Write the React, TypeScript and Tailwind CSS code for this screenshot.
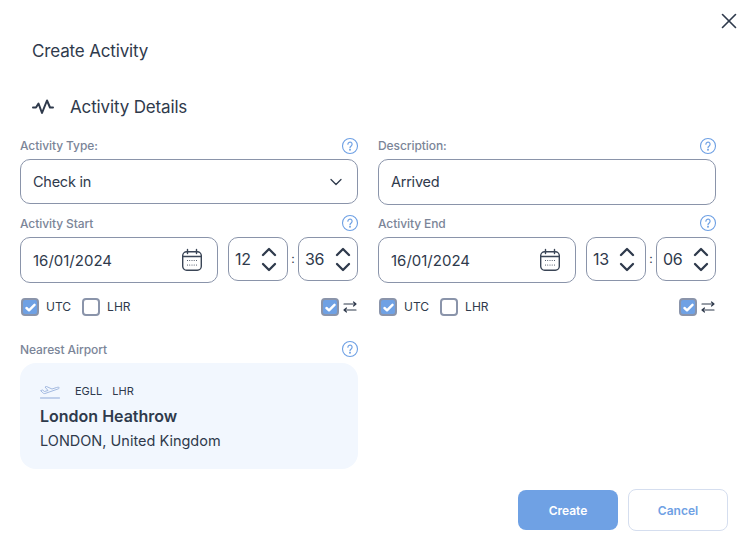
import React from 'react';
import { X, ChevronDown, ChevronUp } from 'lucide-react';

const HelpIcon = () => (
  <svg width="18" height="18" viewBox="0 0 18 18" fill="none" stroke="#6ea0e4" strokeWidth="1.1" strokeLinecap="round" className="-mr-px">
    <circle cx="9" cy="9" r="7.500" />
    <path d="M6.900 7.200a2.100 2.100 0 1 1 3.300 1.700c-.7.500-1.200.900-1.200 1.800" strokeWidth="1.200" />
    <circle cx="9" cy="12.800" r="0.400" fill="#6ea0e4" />
  </svg>
);

const Pulse = () => (
  <svg width="22" height="16" viewBox="0 0 22 16" fill="none" stroke="#2f3a4c" strokeWidth="2" strokeLinecap="round" strokeLinejoin="round">
    <path d="M1 8.500H4L6.500 4.500 10 14 15 1.500 18 8.500H21" />
  </svg>
);

const CalendarIcon = () => (
  <svg width="22" height="24" viewBox="0 0 22 24" fill="none" stroke="#3a4556" strokeWidth="1.400" strokeLinecap="round">
    <rect x="1.700" y="3.700" width="18.600" height="18.600" rx="4" />
    <path d="M1.700 8.500h18.600M6.500 1.500v4M15.500 1.500v4" />
    <path d="M6.500 12.500h.01M11 12.500h.01M15.500 12.500h.01M6.500 17h.01M11 17h.01M15.500 17h.01M8.700 12.500h.01M13.200 12.500h.01M8.700 17h.01M13.200 17h.01" strokeWidth="1.100" />
  </svg>
);

const SwapIcon = () => (
  <svg width="14" height="12" viewBox="0 0 14 12" fill="none" stroke="#2f3a4c" strokeWidth="1.200" strokeLinecap="round" strokeLinejoin="round">
    <path d="M1 3h12M10.500 1 13 3 10.500 5M13 9H1M3.500 7 1 9 3.500 11" />
  </svg>
);

const PlaneIcon = () => (
  <svg width="20" height="15" viewBox="0 0 20 15" fill="none" stroke="#8fa9d8" strokeWidth="0.800" strokeLinejoin="round" strokeLinecap="round">
    <path d="M1 6.500 2.500 6l2 1.500 3.500-1L5 3 6.500 2.500l5.500 2.500 4.500-1.500c1-.3 2.500-.4 2.700.2s-1 1.300-2.200 1.600L5 9.500c-1 .2-1.500 0-2-.5z" />
    <path d="M0.500 14h19" strokeWidth="1" />
  </svg>
);

const Check = ({ checked }: { checked: boolean }) => (
  <span
    className={`flex h-[18px] w-[18px] shrink-0 items-center justify-center rounded-[4px] border-2 border-[#8a94aa] ${
      checked ? 'bg-[#6fa1e4]' : 'bg-white'
    }`}
  >
    {checked && (
      <svg width="11" height="9" viewBox="0 0 11 9" fill="none" stroke="#fff" strokeWidth="2.400" strokeLinecap="round" strokeLinejoin="round">
        <path d="M1.500 5 4 7.300 9.500 1.800" />
      </svg>
    )}
  </span>
);

const Label = ({ text, low }: { text: string; low?: boolean }) => (
  <div className="flex h-[18px] items-center justify-between">
    <span className={`text-[12px] font-medium tracking-[-0.08px] text-[#7b8598] ${low ? 'pt-[2px]' : ''}`}>{text}</span>
    <HelpIcon />
  </div>
);

const Stepper = ({ value, minute }: { value: string; minute?: boolean }) => (
  <div
    className={`flex h-[44px] w-[60px] items-center justify-between rounded-[10px] border border-[#8a94aa] pl-[6px] ${
      minute ? 'pr-[2px]' : 'pr-[6px]'
    }`}
  >
    <span className="text-[16px] tracking-[-0.3px] text-[#2f3a4c]">{value}</span>
    <div className="flex flex-col items-center text-[#2f3a4c]">
      <ChevronUp size={24} strokeWidth={2.300} className="-mb-[4.500px]" />
      <ChevronDown size={24} strokeWidth={2.300} className="-mt-[4.500px]" />
    </div>
  </div>
);

const DateTimeField = ({ label, hour, minute }: { label: string; hour: string; minute: string }) => (
  <div>
    <Label text={label} low />
    <div className="mt-[5px] flex items-start">
      <div className="flex h-[46px] w-[198px] items-center justify-between rounded-[10px] border border-[#8a94aa] pl-[12px] pr-[14px]">
        <span className="pt-[2px] text-[15px] text-[#2f3a4c]">16/01/2024</span>
        <CalendarIcon />
      </div>
      <div className="ml-[10px]">
        <Stepper value={hour} />
      </div>
      <span className="flex h-[44px] w-[10px] items-center justify-center text-[12px] text-[#2f3a4c]">:</span>
      <Stepper value={minute} minute />
    </div>
    <div className="mt-[14px] flex h-[20px] items-center justify-between">
      <div className="flex items-center pl-px">
        <Check checked />
        <span className="ml-[7px] text-[12px] text-[#2f3a4c]">UTC</span>
        <span className="ml-[11px]">
          <Check checked={false} />
        </span>
        <span className="ml-[7px] text-[12px] text-[#2f3a4c]">LHR</span>
      </div>
      <div className="flex items-center gap-[4px] pr-px">
        <Check checked />
        <SwapIcon />
      </div>
    </div>
  </div>
);

const App: React.FC = () => {
  return (
    <div className="h-[557px] w-[751px] overflow-hidden bg-white font-['Inter',sans-serif]">
      <div className="flex justify-end pr-[9px] pt-[8px]">
        <X size={26} strokeWidth={1.500} className="text-[#2f3a4c]" />
      </div>

      <h1 className="mt-[5px] pl-[32px] text-[17px] font-normal leading-[24px] tracking-[-0.15px] text-[#2f3a4c]">Create Activity</h1>

      {/* Section header */}
      <div className="mt-[32px] flex h-[24px] items-center gap-[16px] pl-[32px]">
        <Pulse />
        <span className="text-[17px] leading-[24px] tracking-[-0.15px] text-[#2f3a4c]">Activity Details</span>
      </div>

      <div className="mt-[18px] grid w-[716px] grid-cols-[338px_338px] gap-x-[20px] pl-[20px] pr-0">
        <div>
          <Label text="Activity Type:" />
          <div className="mt-[4px] flex h-[45px] items-center justify-between rounded-[10px] border border-[#8a94aa] pl-[12px] pr-[11px]">
            <span className="text-[14.500px] tracking-[-0.25px] text-[#2f3a4c]">Check in</span>
            <ChevronDown size={20} strokeWidth={1.500} className="text-[#2f3a4c]" />
          </div>
        </div>
        <div>
          <Label text="Description:" />
          <div className="mt-[4px] flex h-[46px] items-center rounded-[10px] border border-[#8a94aa] pl-[12px]">
            <span className="text-[14.500px] tracking-[-0.25px] text-[#2f3a4c]">Arrived</span>
          </div>
        </div>

        <div className="mt-[9px]">
          <DateTimeField label="Activity Start" hour="12" minute="36" />
        </div>
        <div className="mt-[9px]">
          <DateTimeField label="Activity End" hour="13" minute="06" />
        </div>

        <div className="mt-[23px]">
          <Label text="Nearest Airport" low />
          <div className="mt-[5px] h-[106px] rounded-[16px] bg-[#f2f7fe] pl-[20px] pt-[19px]">
            <div className="flex h-[18px] items-center">
              <PlaneIcon />
              <span className="ml-[15px] text-[11px] text-[#2f3a4c]">EGLL</span>
              <span className="ml-[10px] text-[11px] text-[#2f3a4c]">LHR</span>
            </div>
            <div className="mt-[4px] text-[16px] font-semibold leading-[24px] text-[#2f3a4c]">London Heathrow</div>
            <div className="mt-px text-[14.500px] leading-[24px] text-[#2f3a4c]">LONDON, United Kingdom</div>
          </div>
        </div>
      </div>

      <div className="mt-[20px] flex items-center justify-end gap-[10px] pr-[23px]">
        <button className="h-[40px] w-[100px] rounded-[8px] bg-[#6fa1e4] pt-[2px] text-[12px] font-semibold text-white">Create</button>
        <button className="h-[42px] w-[100px] rounded-[8px] border border-[#d5deef] bg-white pt-[2px] text-[12px] font-semibold text-[#6fa1e4]">Cancel</button>
      </div>
    </div>
  );
};

export default App;
